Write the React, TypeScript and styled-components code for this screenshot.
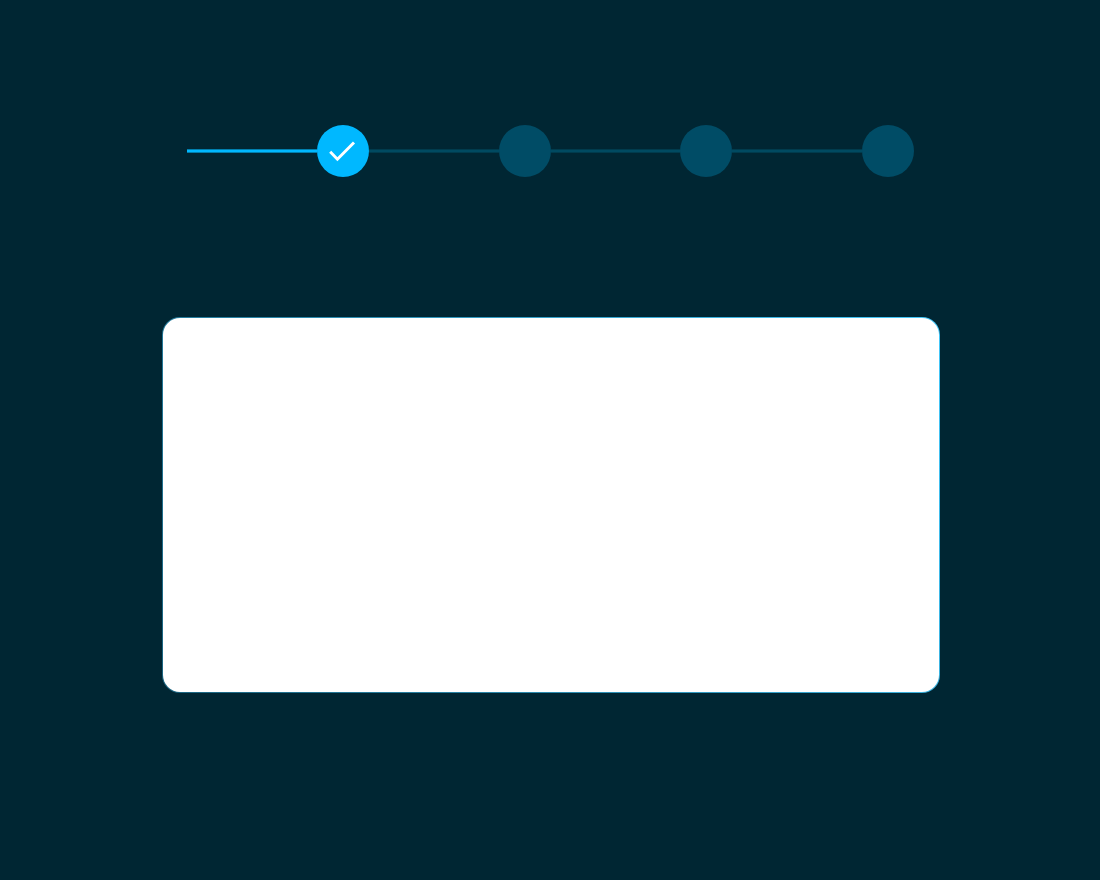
import React from "react";
import styled, { createGlobalStyle } from "styled-components";

const GlobalStyle = createGlobalStyle`
  * { box-sizing: border-box; }
  body {
    margin: 0;
    background: #002633;
    font-family: Lato, "Liberation Sans", sans-serif;
  }
`;

const Page = styled.main`
  min-height: 100vh;
  display: flex;
  flex-direction: column;
  gap: 140px;
  padding: 125px 160px 187px 162px;
`;

const Stepper = styled.ol`
  display: flex;
  margin: 0;
  padding: 0 26px 0 25px;
  list-style: none;
`;

const Step = styled.li`
  flex: 1;
  display: flex;
  align-items: center;
`;

const Connector = styled.span<{ $done: boolean }>`
  flex: 1;
  height: 4px;
  background: ${(p) => (p.$done ? "#00b8ff" : "#004a61")};
  border: solid ${(p) => (p.$done ? "#007fae" : "#003b4d")};
  border-width: 1px 0;
`;

const Marker = styled.span<{ $done: boolean }>`
  flex: none;
  display: flex;
  align-items: center;
  justify-content: center;
  width: 52px;
  height: 52px;
  border-radius: 50%;
  background: ${(p) => (p.$done ? "#00b8ff" : "#004c66")};
`;

const Panel = styled.section`
  flex: 1;
  min-height: 376px;
  border: 1px solid transparent;
  border-radius: 18px;
  background:
    linear-gradient(#ffffff, #ffffff) padding-box,
    linear-gradient(60deg, #1b6480, #44c8fa) border-box;
`;

const steps = [true, false, false, false];

function CheckIcon() {
  return (
    <svg width="52" height="52" viewBox="0 0 52 52" fill="none" aria-hidden="true">
      <path d="M13.2 26.8L20.4 34.2L37 17.4" stroke="#ffffff" strokeWidth="2.9" />
    </svg>
  );
}

export default function App() {
  return (
    <>
      <GlobalStyle />
      <Page>
        <Stepper>
          {steps.map((done, i) => (
            <Step key={i} aria-current={i === 1 ? "step" : undefined}>
              <Connector $done={done} />
              <Marker $done={done}>{done && <CheckIcon />}</Marker>
            </Step>
          ))}
        </Stepper>
        <Panel />
      </Page>
    </>
  );
}
